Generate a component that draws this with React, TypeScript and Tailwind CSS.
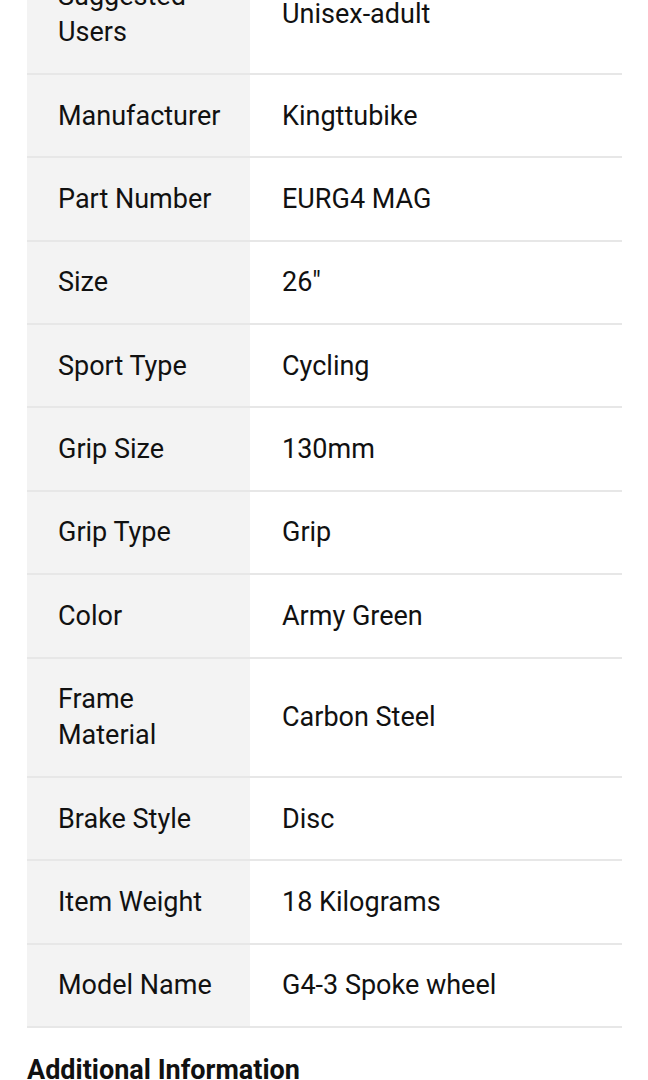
const rows: [string, string][] = [
  ["Suggested Users", "Unisex-adult"],
  ["Manufacturer", "Kingttubike"],
  ["Part Number", "EURG4 MAG"],
  ["Size", '26"'],
  ["Sport Type", "Cycling"],
  ["Grip Size", "130mm"],
  ["Grip Type", "Grip"],
  ["Color", "Army Green"],
  ["Frame Material", "Carbon Steel"],
  ["Brake Style", "Disc"],
  ["Item Weight", "18 Kilograms"],
  ["Model Name", "G4-3 Spoke wheel"],
];

export default function App() {
  return (
    <div className="min-h-screen bg-white text-[#111111] font-['Roboto',sans-serif] overflow-hidden">
      {/* table is scrolled: first row partly above the fold */}
      <div className="mt-[-44.5px] ml-[27px] mr-[26px]">
        <table className="w-full table-fixed border-collapse text-[27px] leading-[36px]">
          <tbody>
            {rows.map(([k, v]) => (
              <tr key={k} className="border-b-2 border-[#e7e7e7]">
                <td className="w-[223px] bg-[#f3f3f3] pl-[31px] pr-[20px] py-[22.7px] align-middle">
                  {k}
                </td>
                <td className="pl-[32px] pr-4 py-[22.7px] align-middle">{v}</td>
              </tr>
            ))}
          </tbody>
        </table>
        <h2 className="mt-[24px] text-[27px] leading-[36px] font-bold">
          Additional Information
        </h2>
      </div>
    </div>
  );
}
